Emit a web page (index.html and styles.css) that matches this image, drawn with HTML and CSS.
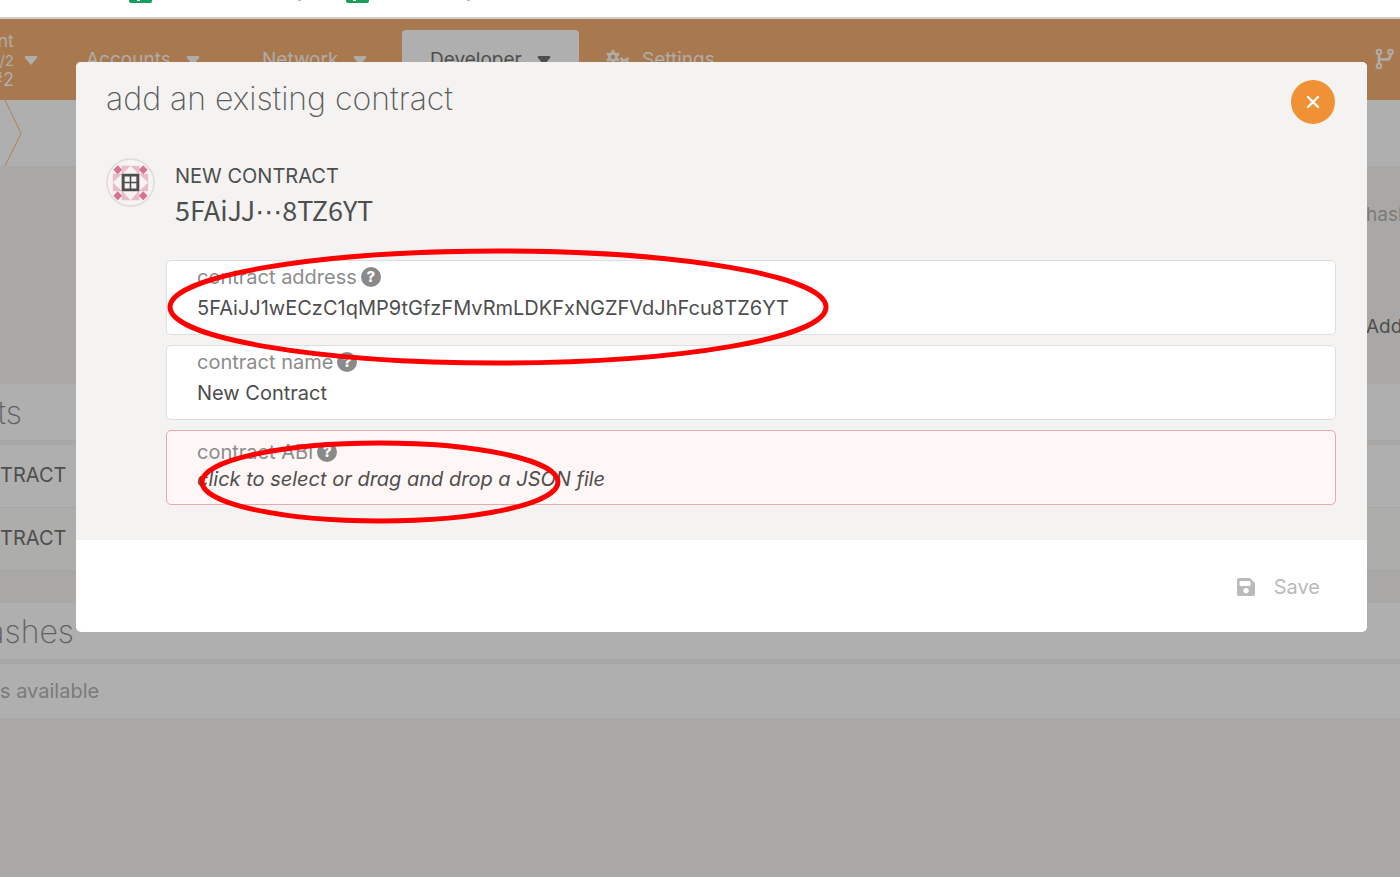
FILE: index.html
```html
<!DOCTYPE html>
<html lang="en">
<head>
<meta charset="utf-8">
<title>Contracts</title>
<link rel="stylesheet" href="styles.css">
</head>
<body>
<div class="browser-bar">
  <svg class="bookmarks" width="600" height="4" aria-hidden="true">
    <path d="M129 0h23v1q0 2-2 2h-19q-2 0-2-2z" fill="#12a05a"/>
    <path d="M346 0h23v1q0 2-2 2h-19q-2 0-2-2z" fill="#12a05a"/>
    <path d="M137 0h3M353 0h3" stroke="#fff" stroke-width="2"/>
    <path d="M298 0h3M467 0h3" stroke="#bbb" stroke-width="2"/>
  </svg>
</div>
<header class="nav">
  <button class="chain" type="button">
    <span class="chain-text"><span>nt</span><small>-/2</small><span>#2</span></span>
    <svg class="caret" width="14" height="9" viewBox="0 0 14 9"><path d="M2 0h10q2 0 1 2L8 8Q7 9 6 8L1 2Q0 0 2 0z"/></svg>
  </button>
  <nav class="menu">
    <a class="item accounts" href="#">Accounts <svg class="caret" width="14" height="9" viewBox="0 0 14 9"><path d="M2 0h10q2 0 1 2L8 8Q7 9 6 8L1 2Q0 0 2 0z"/></svg></a>
    <a class="item network" href="#">Network <svg class="caret" width="14" height="9" viewBox="0 0 14 9"><path d="M2 0h10q2 0 1 2L8 8Q7 9 6 8L1 2Q0 0 2 0z"/></svg></a>
    <a class="item developer" href="#">Developer <svg class="caret" width="14" height="9" viewBox="0 0 14 9"><path d="M2 0h10q2 0 1 2L8 8Q7 9 6 8L1 2Q0 0 2 0z"/></svg></a>
    <a class="item settings" href="#"><svg width="24" height="20" viewBox="0 0 24 20" fill="none" stroke="currentColor"><circle cx="7" cy="7" r="3.600" stroke-width="2.800"/><path d="M7 0v3M7 11v3M1 3.500L3.500 5M10.500 9l2.500 1.500M1 10.500L3.500 9M10.500 5L13 3.500" stroke-width="3"/><circle cx="18.500" cy="13" r="3" stroke-width="2.500"/><path d="M15 7.500l1.500 3M22 7.500l-1.500 3M12.500 13h3M21 13h3M15 18.500l1.500-3M22 18.500l-1.500-3" stroke-width="2.600"/></svg>Settings</a>
  </nav>
  <svg class="branch" width="20" height="22" viewBox="0 0 20 22" fill="none" stroke="currentColor" stroke-width="2"><circle cx="4" cy="4" r="2.300"/><circle cx="15.500" cy="4" r="2.300"/><circle cx="4" cy="18" r="2.300"/><path d="M4 6.500v9M4 11.500h8q3 0 3.500-5" stroke-width="2.600"/></svg>
</header>
<div class="tabs"><svg width="24" height="66" viewBox="0 0 24 66" fill="none" stroke="#b57f4b"><path d="M5 0l16 33.500L5 66"/></svg></div>
<main class="content">
  <div class="side"><span class="muted">hash</span><span>Add</span></div>
  <section class="list">
    <h2 class="band codes">ts</h2>
    <div class="row">TRACT</div>
    <div class="row shaded">TRACT</div>
  </section>
  <section class="list">
    <h2 class="band hashes">ashes</h2>
    <div class="row empty">s available</div>
  </section>
</main>

<div class="modal" role="dialog" aria-labelledby="dialog-title">
  <div class="modal-body">
    <div class="modal-head">
      <h1 id="dialog-title">add an existing contract</h1>
      <button class="close" type="button" aria-label="Close"><svg width="14" height="14" viewBox="0 0 14 14"><path d="M2 2l10 10M12 2L2 12" stroke="#fff" stroke-width="2.400" stroke-linecap="round"/></svg></button>
    </div>
    <div class="identity">
      <svg class="identicon" width="49" height="49" viewBox="0 0 50 50">
        <circle cx="25" cy="25" r="24" fill="#f5f4f2" stroke="#dcdcdc" stroke-width="1.500"/>
        <g fill="#eabbc8"><path d="M16 8h9l-9 9zM25 8h9v9zM7 16h9.500L7 25zM43 16h-9.500l9.500 9zM7 25l9.500 9H7zM43 25l-9.500 9H43zM16 33l9 10h-9zM34 33l-9 10h9z"/></g>
        <g fill="#d6738d"><path d="M12 7.500l4.500 4.500L12 16.500 7.500 12zM38 7.500l4.500 4.500-4.500 4.500-4.500-4.500zM12 34l4.500 4.500L12 43l-4.500-4.500zM38 34l4.500 4.500L38 43l-4.500-4.500z"/></g>
        <path d="M16 16h18v18H16z" fill="#4e4e4e"/>
        <path d="M19 19h5.200v5.200H19zM25.800 19H31v5.200h-5.200zM19 25.800h5.200V31H19zM25.800 25.800H31V31h-5.200z" fill="#f5f4f2"/>
      </svg>
      <div><div class="id-name">NEW CONTRACT</div><div class="id-address">5FAiJJ<span class="dots">⋯</span>8TZ6YT</div></div>
    </div>
    <form class="fields" id="contract-form">
      <div class="field">
        <label for="address">contract address <span class="help">?</span></label>
        <input id="address" type="text" value="5FAiJJ1wECzC1qMP9tGfzFMvRmLDKFxNGZFVdJhFcu8TZ6YT">
      </div>
      <div class="field">
        <label for="name">contract name <span class="help">?</span></label>
        <input id="name" type="text" value="New Contract">
      </div>
      <div class="field error">
        <label for="abi">contract ABI <span class="help">?</span></label>
        <button id="abi" class="drop" type="button">click to select or drag and drop a JSON file</button>
      </div>
    </form>
  </div>
  <footer class="modal-foot">
    <button class="save" type="submit" form="contract-form"><svg width="18" height="18" viewBox="0 0 18 18"><path fill="currentColor" fill-rule="evenodd" d="M2 0h11l5 5v11q0 2-2 2H2q-2 0-2-2V2q0-2 2-2zM3.500 3q-1 0-1 1v3q0 1 1 1h9q1 0 1-1V4q0-1-1-1zM9 10a2.700 2.700 0 1 0 .01 0z"/></svg>Save</button>
  </footer>
</div>
<svg class="marks" width="840" height="540" fill="none" stroke="#f00" stroke-width="5" aria-hidden="true">
  <ellipse cx="498" cy="307" rx="328" ry="56"/>
  <ellipse cx="380" cy="482" rx="178" ry="39"/>
</svg>
</body>
</html>
```
FILE: styles.css
```css
* { box-sizing: border-box; }
body {
  margin: 0;
  min-height: 100vh;
  position: relative;
  overflow: hidden;
  background: #a9a8a6;
  color: #4e4e4e;
  font: 20px/28px Inter, "Liberation Sans", sans-serif;
}
button, input { font: inherit; color: inherit; border: 0; padding: 0; background: none; }
svg { display: block; flex: none; }
h1, h2 { margin: 0; font-weight: 200; font-size: 32px; line-height: 44px; }

.browser-bar { height: 19px; background: #fff; border-bottom: 2px solid #cfccc9; }
.nav { display: flex; height: 81px; background: #a8794f; color: #b0aca8; }
.chain { display: flex; align-items: center; gap: 10px; width: 74px; padding-top: 2px; }
.chain-text { display: flex; flex-direction: column; align-items: flex-end; width: 14px; overflow: hidden; font-size: 18px; line-height: 20px; }
.chain-text small { font-size: 15px; line-height: 19px; }
.caret { fill: currentColor; }
.menu { display: flex; flex: 1; padding-top: 11px; }
.item { display: flex; align-items: center; gap: 15px; height: 60px; padding: 0 12px; font-size: 19px; color: inherit; text-decoration: none; }
.accounts { width: 176px; }
.network { width: 152px; }
.developer { width: 177px; padding: 0 28px; background: #afafaf; color: #4e4e4e; border-radius: 4px; }
.settings { gap: 12px; padding: 0 27px; }
.branch { margin: 29px 5px 0 0; }
.tabs { height: 66px; background: #afafaf; }

.side { display: flex; flex-direction: column; gap: 84px; width: 34px; height: 218px; margin-left: auto; padding-top: 35px; overflow: hidden; font-size: 19px; }
.muted { color: #7b7b7a; }
.list { margin-bottom: 32px; }
.band { display: flex; justify-content: flex-end; height: 56px; margin-bottom: 5px; padding-top: 7px; background: #afafaf; color: #626262; }
.codes { padding-right: calc(100% - 22px); }
.hashes { padding-right: calc(100% - 74px); }
.row { height: 63px; padding: 16px 0; background: #afafaf; border-bottom: 1px solid #a6a6a5; }
.row.shaded { background: #adadab; }
.row.empty { height: 54px; padding: 13px 0; color: #7b7b7a; border: 0; }

.modal { position: absolute; top: 62px; left: 76px; right: 33px; border-radius: 5px; overflow: hidden; background: #fff; }
.modal-body { padding: 15px 31px 35px 30px; background: #f4f3f1; }
.modal-head { display: flex; justify-content: space-between; height: 48px; }
.modal-head h1 { color: #5c5c5c; }
.close { display: grid; place-items: center; width: 44px; height: 44px; margin: 3px 1px 0 0; border-radius: 50%; background: #f19135; }
.identity { display: flex; gap: 20px; height: 74px; margin-top: 33px; }
.id-name { padding-top: 4px; }
.id-address { font: 27px/36px "Noto Sans CJK SC", sans-serif; margin-top: 2px; }
.dots { font-family: "Noto Sans", "DejaVu Sans", sans-serif; }
.fields { display: flex; flex-direction: column; gap: 10px; margin: 28px 0 0 60px; }
.field { display: flex; flex-direction: column; height: 75px; padding: 2px 30px 0; background: #fff; border: 1px solid #dedede; border-radius: 5px; }
.field label { display: flex; align-items: center; gap: 4px; color: #8c8c8c; }
.field input { width: 100%; height: 34px; outline: 0; }
.help { display: grid; place-items: center; width: 20px; height: 20px; border-radius: 50%; background: #898989; color: #fff; font-size: 15px; line-height: 20px; font-weight: 800; }
.error { padding-top: 7px; background: #fff6f6; border-color: #e5a9ae; }
.drop { text-align: left; font-style: italic; line-height: 26px; }
.modal-foot { display: flex; justify-content: flex-end; align-items: center; height: 92px; padding: 2px 47px 0 0; }
.save { display: flex; align-items: center; gap: 19px; color: #bababa; }
.marks { position: absolute; top: 0; left: 0; pointer-events: none; }
```
